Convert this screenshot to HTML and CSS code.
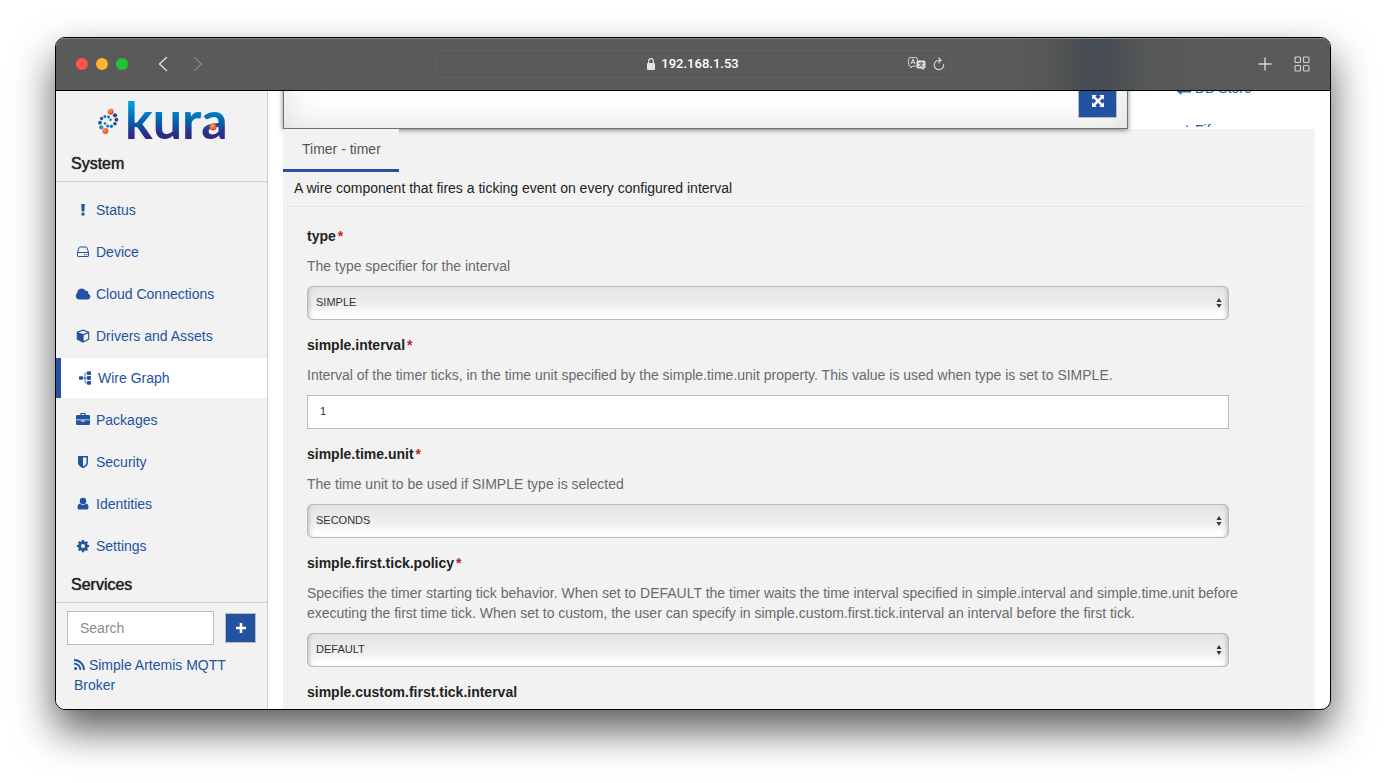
FILE: index.html
```html
<!DOCTYPE html>
<html lang="en">
<head>
<meta charset="utf-8">
<meta name="viewport" content="width=device-width, initial-scale=1">
<title>Kura - Wire Graph</title>
<link rel="stylesheet" href="styles.css">
</head>
<body>
<div class="window">
  <header class="toolbar">
    <div class="toolbar-left">
      <span class="light light-close"></span>
      <span class="light light-min"></span>
      <span class="light light-max"></span>
      <button class="tool tool-back" type="button" aria-label="Back">
        <svg width="10" height="16" viewBox="0 0 10 16"><path d="M8.500 1.500 1.500 8l7 6.500" fill="none" stroke="#d8d8d8" stroke-width="1.600" stroke-linecap="round" stroke-linejoin="round"/></svg>
      </button>
      <button class="tool tool-forward" type="button" aria-label="Forward">
        <svg width="10" height="16" viewBox="0 0 10 16"><path d="m1.500 1.500 7 6.500-7 6.500" fill="none" stroke="#828282" stroke-width="1.600" stroke-linecap="round" stroke-linejoin="round"/></svg>
      </button>
    </div>
    <div class="address">
      <div class="address-host">
        <svg width="8" height="12" viewBox="0 0 8 12"><rect y="5" width="8" height="7" rx="1" fill="#e4e4e4"/><path d="M1.700 5.500V3.200a2.300 2.500 0 0 1 4.600 0v2.300" fill="none" stroke="#e4e4e4" stroke-width="1.200"/></svg>
        <span>192.168.1.53</span>
      </div>
      <div class="address-tools">
        <button class="tool" type="button" aria-label="Translate">
          <svg width="18" height="14" viewBox="0 0 18 14"><path d="M8 9H5L3 11V9H2.300Q.6 9 .6 7.300V2.300Q.6.6 2.300.6h5.400q1.700 0 1.700 1.700V4" fill="none" stroke="#d6d6d6"/><path d="m3 7 2-5 2 5M3.700 5.400h2.600" fill="none" stroke="#d6d6d6"/><path d="M10 3.500h6q1.500 0 1.500 1.500v5q0 1.500-1.500 1.500h-.5v2l-2-2H10q-1.500 0-1.500-1.500V5q0-1.500 1.500-1.500z" fill="#dedede"/><path d="M10.500 6.200h5M13 5v1.200m1.500 0q-.5 2.500-4 3.600m1-3.600q.5 2.500 4 3.600" fill="none" stroke="#5a5a5a" stroke-width=".9"/></svg>
        </button>
        <button class="tool" type="button" aria-label="Reload">
          <svg width="12" height="14" viewBox="0 0 12 14"><path d="M10.600 7.500A4.700 4.700 0 1 1 6 3.300h1.500" fill="none" stroke="#d0d0d0" stroke-width="1.200" stroke-linecap="round"/><path d="m5.600.9 2.500 2.400-2.500 2.500" fill="none" stroke="#d0d0d0" stroke-width="1.200" stroke-linecap="round" stroke-linejoin="round"/></svg>
        </button>
      </div>
    </div>
    <div class="toolbar-right">
      <button class="tool" type="button" aria-label="New tab">
        <svg width="14" height="14" viewBox="0 0 14 14"><path d="M7 .5v13M.5 7h13" stroke="#d4d4d4" stroke-width="1.400"/></svg>
      </button>
      <button class="tool" type="button" aria-label="Tab overview">
        <svg width="16" height="16" viewBox="0 0 16 16"><g fill="none" stroke="#cfcfcf" stroke-width="1.200"><rect x="1" y="1" width="5.500" height="5.500" rx="1"/><rect x="9.500" y="1" width="5.500" height="5.500" rx="1"/><rect x="1" y="9.500" width="5.500" height="5.500" rx="1"/><rect x="9.500" y="9.500" width="5.500" height="5.500" rx="1"/></g></svg>
      </button>
    </div>
  </header>

  <div class="page">
    <aside class="sidebar">
      <div class="brand">
        <svg class="logo" width="128" height="38" viewBox="0 0 128 38" role="img" aria-label="kura">
          <defs>
            <linearGradient id="word" gradientUnits="userSpaceOnUse" x1="0" y1="0" x2="0" y2="38">
              <stop offset="0" stop-color="#00a3e6"/><stop offset=".5" stop-color="#0467b0"/><stop offset=".85" stop-color="#2b2f86"/><stop offset="1" stop-color="#33277f"/>
            </linearGradient>
            <radialGradient id="ball" cx=".4" cy=".35"><stop offset="0" stop-color="#f9a05c"/><stop offset="1" stop-color="#e8572c"/></radialGradient>
          </defs>
          <circle cx="12.700" cy="10.700" r="3" fill="url(#ball)"/>
          <circle cx="7.400" cy="30" r="3" fill="url(#ball)"/>
          <g fill="#20498f">
            <circle cx="17" cy="14.300" r="2.100"/><circle cx="18.400" cy="18.700" r="1.900"/><circle cx="17" cy="22.700" r="1.800"/>
          </g>
          <g fill="#1876b4">
            <circle cx="13.400" cy="25.300" r="1.700"/><circle cx="9.700" cy="24.900" r="1.500"/><circle cx="7" cy="22.500" r="1.300"/>
            <circle cx="12.500" cy="18.700" r="1.300"/><circle cx="10.500" cy="16" r="1.400"/><circle cx="6.900" cy="15.600" r="1.500"/>
          </g>
          <g fill="#1a5d9e">
            <circle cx="3.600" cy="17.500" r="1.700"/><circle cx="2" cy="21.700" r="1.900"/>
          </g>
          <circle cx="3.200" cy="26.300" r="2.100" fill="#1c8fce"/>
          <text class="wordmark" x="27" y="38" fill="url(#word)">kura</text>
          <circle cx="115" cy="26" r="3.500" fill="url(#ball)"/>
        </svg>
      </div>

      <h2 class="side-heading">System</h2>
      <ul class="nav">
        <li><a class="nav-link" href="#status"><svg class="icon" viewBox="0 0 14 14"><path d="M5.200 1h3.600l-.5 7.500H5.700zM5.500 9.700h3v2.900h-3z"/></svg>Status</a></li>
        <li><a class="nav-link" href="#device"><svg class="icon" viewBox="0 0 14 14"><path d="M1.500 7.500 3 2.700q.2-.7 1-.7h6q.8 0 1 .7l1.500 4.800M1.500 7.500h11v3.300q0 .7-.7.700H2.200q-.7 0-.7-.7z" fill="none" stroke="currentColor"/><path d="M8 9h1.200v1.200H8zm2.200 0h1.200v1.200h-1.200z"/></svg>Device</a></li>
        <li><a class="nav-link" href="#cloud"><svg class="icon icon-wide" viewBox="0 0 16 14"><path d="M4 12.500A3.700 3.700 0 0 1 2.300 5.800 4.300 4.300 0 0 1 10.300 3.600 2.700 2.700 0 0 1 13.400 6.700 3 3 0 0 1 12.700 12.500z"/></svg>Cloud Connections</a></li>
        <li><a class="nav-link" href="#drivers"><svg class="icon" viewBox="0 0 14 14"><path fill-rule="evenodd" d="M7 .5l6.200 2.300v7.600L7 13.800.8 10.400V2.800zM7 1.700 2.400 3.400 7 5.100l4.600-1.700zM7.600 6.200v6l4.500-2.500V4.500z"/></svg>Drivers and Assets</a></li>
        <li><a class="nav-link nav-link-active" href="#wires" aria-current="page"><svg class="icon" viewBox="0 0 14 14"><rect x="1" y="5.200" width="4" height="3.600" rx=".8"/><rect x="9" y=".2" width="4" height="3.800" rx=".8"/><rect x="9" y="5.100" width="4" height="3.800" rx=".8"/><rect x="9" y="10" width="4" height="3.800" rx=".8"/><path d="M5 7h4M9 2H7.800q-.8 0-.8.800v8.400q0 .8.800.8H9" fill="none" stroke="currentColor" stroke-width=".8"/></svg>Wire Graph</a></li>
        <li><a class="nav-link" href="#packages"><svg class="icon" viewBox="0 0 14 14"><path fill-rule="evenodd" d="M4.300 2V.8q0-.8.800-.8h3.800q.8 0 .8.800V2h3q1.300 0 1.300 1.300v3.200H0V3.300Q0 2 1.300 2zm1.200 0h3v-.9h-3zM0 7.300h5.400v.8q0 .6.600.6h2q.6 0 .6-.6v-.8H14v3.500q0 1.200-1.200 1.200H1.200Q0 12 0 10.800zM6.300 7.300h1.400v.7H6.300z"/></svg>Packages</a></li>
        <li><a class="nav-link" href="#security"><svg class="icon" viewBox="0 0 14 14"><path fill-rule="evenodd" d="M2 1h10v6.500q0 3.500-5 5.700-5-2.200-5-5.700zm5 1.500v8.900q3.500-1.700 3.500-3.900v-5z"/></svg>Security</a></li>
        <li><a class="nav-link" href="#identities"><svg class="icon" viewBox="0 0 14 14"><circle cx="7" cy="4" r="3.200"/><path d="M3.900 6.500Q5 7.900 7 7.900t3.100-1.400q2.400.5 2.400 4 0 2-1.800 2H3.300q-1.800 0-1.800-2 0-3.500 2.400-4z"/></svg>Identities</a></li>
        <li><a class="nav-link" href="#settings"><svg class="icon" viewBox="0 0 14 14"><path fill-rule="evenodd" d="M6 1h2l.3 1.600 1 .4 1.300-.9 1.400 1.400-.9 1.300.4 1 1.600.3v2l-1.600.3-.4 1 .9 1.300-1.400 1.400-1.300-.9-1 .4L8 13.200H6l-.3-1.600-1-.4-1.300.9L2 10.700l.9-1.300-.4-1L.9 8.100v-2l1.600-.3.4-1L2 3.500l1.400-1.400 1.300.9 1-.4zM7 5a2.100 2.100 0 1 0 0 4.200A2.100 2.100 0 0 0 7 5z"/></svg>Settings</a></li>
      </ul>

      <h2 class="side-heading">Services</h2>
      <div class="search-row">
        <input class="search" type="text" placeholder="Search" aria-label="Search services">
        <button class="btn btn-add" type="button" aria-label="Add service">
          <svg width="10" height="10" viewBox="0 0 10 10"><path d="M5 0v10M0 5h10" stroke="#fff" stroke-width="2.600"/></svg>
        </button>
      </div>
      <a class="service" href="#broker"><svg width="11" height="11" viewBox="0 0 11 11"><circle cx="1.600" cy="9.400" r="1.500"/><path d="M0 4.600a6.300 6.300 0 0 1 6.400 6.400M0 1a10 10 0 0 1 10 10" fill="none" stroke="currentColor" stroke-width="1.800"/></svg> Simple Artemis MQTT Broker</a>
    </aside>

    <main class="main">
      <div class="graph-row">
        <div class="canvas">
          <button class="btn btn-full" type="button" aria-label="Full screen">
            <svg width="12" height="12" viewBox="0 0 12 12"><path d="M0 0h4.800L3.300 1.500 6 4.200l2.700-2.700L7.200 0H12v4.800l-1.500-1.500L7.800 6l2.700 2.700L12 7.200V12H7.200l1.500-1.500L6 7.800l-2.700 2.700L4.800 12H0V7.200l1.500 1.500L4.200 6 1.500 3.300 0 4.800z" fill="#fff"/></svg>
          </button>
        </div>
        <div class="palette">
          <a class="palette-item" href="#dbstore"><svg width="14" height="14" viewBox="0 0 14 14"><path d="M0 10.500 4.500 6v3.400H14v2H4.500V14z"/></svg>DB Store</a>
          <a class="palette-item" href="#fifo"><svg width="14" height="14" viewBox="0 0 14 14"><path d="M0 6h9.500V1.500L14 7l-4.500 5V8H0z"/></svg>Fifo</a>
        </div>
      </div>

      <section class="panel">
        <div class="tabs"><a class="tab" href="#timer">Timer - timer</a></div>
        <p class="summary">A wire component that fires a ticking event on every configured interval</p>
        <form class="form">
          <div class="field">
            <label class="label" for="type">type<span class="required">*</span></label>
            <p class="help">The type specifier for the interval</p>
            <div class="select-box">
              <select class="select" id="type"><option>SIMPLE</option></select>
              <svg class="arrows" width="6" height="10" viewBox="0 0 6 10"><path d="M3 0 5.500 4h-5zM3 10 .5 6h5z"/></svg>
            </div>
          </div>
          <div class="field">
            <label class="label" for="interval">simple.interval<span class="required">*</span></label>
            <p class="help">Interval of the timer ticks, in the time unit specified by the simple.time.unit property. This value is used when type is set to SIMPLE.</p>
            <input class="input" id="interval" type="text" value="1">
          </div>
          <div class="field">
            <label class="label" for="unit">simple.time.unit<span class="required">*</span></label>
            <p class="help">The time unit to be used if SIMPLE type is selected</p>
            <div class="select-box">
              <select class="select" id="unit"><option>SECONDS</option></select>
              <svg class="arrows" width="6" height="10" viewBox="0 0 6 10"><path d="M3 0 5.500 4h-5zM3 10 .5 6h5z"/></svg>
            </div>
          </div>
          <div class="field">
            <label class="label" for="policy">simple.first.tick.policy<span class="required">*</span></label>
            <p class="help">Specifies the timer starting tick behavior. When set to DEFAULT the timer waits the time interval specified in simple.interval and simple.time.unit before executing the first time tick. When set to custom, the user can specify in simple.custom.first.tick.interval an interval before the first tick.</p>
            <div class="select-box">
              <select class="select" id="policy"><option>DEFAULT</option></select>
              <svg class="arrows" width="6" height="10" viewBox="0 0 6 10"><path d="M3 0 5.500 4h-5zM3 10 .5 6h5z"/></svg>
            </div>
          </div>
          <div class="field">
            <span class="label">simple.custom.first.tick.interval</span>
          </div>
        </form>
      </section>
    </main>
  </div>
</div>
</body>
</html>
```

FILE: styles.css
```css
* {
  box-sizing: border-box;
}

body {
  margin: 0;
  height: 100vh;
  padding: 37px 55px 73px;
  overflow: hidden;
  background: #fff;
  color: #222;
  font: 14px/20px "Liberation Sans", Arial, sans-serif;
}

h2, p, ul {
  margin: 0;
  padding: 0;
}

a {
  color: #2352a0;
  text-decoration: none;
}

button, input, select {
  font-family: inherit;
  margin: 0;
}

svg {
  display: block;
  fill: currentColor;
}

.window {
  display: flex;
  flex-direction: column;
  height: 100%;
  border: 1px solid #000;
  border-radius: 10px;
  overflow: hidden;
  background: #fff;
  box-shadow: 0 20px 40px rgba(0, 0, 0, .65);
}

/* Browser toolbar */
.toolbar {
  flex: none;
  display: grid;
  grid-template-columns: 1fr minmax(200px, 515px) 1fr;
  align-items: center;
  height: 53px;
  padding: 0 20px;
  border-bottom: 1px solid #000;
  box-shadow: inset 0 1px 0 #858585;
  background: linear-gradient(90deg, #5a5a5a 75%, #565855 78%, #474c53 81%, #474c53 82%, #575957 86%, #5a5a5a 95%);
}

.toolbar-left,
.toolbar-right {
  display: flex;
  align-items: center;
}

.toolbar-left {
  gap: 8px;
}

.toolbar-right {
  justify-content: flex-end;
  gap: 22px;
}

.light {
  width: 12px;
  height: 12px;
  border-radius: 50%;
}

.light-close { background: #ff544d; }
.light-min { background: #ffb429; }
.light-max { background: #25c138; }

.tool {
  padding: 0;
  border: 0;
  background: none;
}

.tool-back {
  margin-left: 22px;
}

.tool-forward {
  margin-left: 17px;
}

.address {
  display: grid;
  grid-template-columns: 1fr auto 1fr;
  align-items: center;
  height: 28px;
  padding: 0 5px;
  border: 1px solid #626262;
  border-radius: 6px;
}

.address-host {
  grid-column: 2;
  display: flex;
  align-items: center;
  gap: 6px;
  color: #fff;
  font: 500 13px/16px Roboto, sans-serif;
}

.address-tools {
  display: flex;
  justify-content: flex-end;
  gap: 7px;
}

/* Page */
.page {
  flex: 1;
  min-height: 0;
  display: flex;
  overflow: hidden;
}

.sidebar {
  flex: none;
  width: 212px;
  border-right: 1px solid #ccc;
  background: #f2f2f2;
}

.brand {
  display: flex;
  justify-content: center;
  padding: 10px 0 6px;
}

.logo {
  overflow: visible;
}

.wordmark {
  font: 700 52px Lato, sans-serif;
}

.side-heading {
  padding: 9px 15px 7px;
  border-bottom: 1px solid #d2d2d2;
  font-size: 16px;
  font-weight: 400;
  line-height: 20px;
  text-shadow: 0 0 1px #222;
}

.nav {
  display: flex;
  flex-direction: column;
  gap: 2px;
  padding-top: 8px;
  list-style: none;
}

.nav-link {
  display: flex;
  align-items: center;
  gap: 6px;
  padding: 10px 15px 10px 20px;
}

.nav-link-active {
  padding-left: 17px;
  border-left: 5px solid #2352a0;
  background: #fff;
}

.icon {
  width: 14px;
  height: 14px;
}

.icon-wide {
  width: 16px;
  margin: 0 -1px;
}

.search-row {
  display: flex;
  align-items: center;
  gap: 11px;
  padding: 8px 11px;
}

.search {
  flex: 1;
  min-width: 0;
  height: 34px;
  padding: 6px 12px;
  border: 1px solid #bbb;
  border-radius: 0;
  font-size: 14px;
}

.search::placeholder {
  color: #8c8c8c;
}

.btn {
  display: flex;
  align-items: center;
  justify-content: center;
  padding: 0;
  border: 1px solid #bbb;
  background: #2352a0;
}

.btn-add {
  width: 31px;
  height: 30px;
}

.btn-full {
  width: 39px;
  height: 34px;
}

.service {
  display: block;
  padding: 2px 18px;
}

.service svg {
  display: inline-block;
}

.main {
  flex: 1;
  min-width: 0;
  padding: 0 15px;
}

/* The graph area is scrolled partly out of view */
.graph-row {
  display: flex;
  height: 80px;
  margin-top: -42px;
}

.canvas {
  position: relative;
  z-index: 1;
  flex: 1;
  display: flex;
  align-items: flex-end;
  justify-content: flex-end;
  padding: 10px;
  border: 1px solid #707070;
  background: #fff;
  box-shadow: inset 0 0 36px #ddd, 0 1px 5px rgba(0, 0, 0, .5);
}

.palette {
  display: flex;
  flex-direction: column;
  gap: 2px;
  width: 187px;
  margin-bottom: 2px;
  padding: 19px 0 0 49px;
  overflow: hidden;
}

.palette-item {
  display: flex;
  align-items: center;
  gap: 4px;
  padding: 10px 0;
  color: #2563ab;
}

.panel {
  height: 100%;
  background: #f2f2f2;
}

.tabs {
  display: flex;
}

.tab {
  position: relative;
  z-index: 2;
  padding: 10px 18px 10px 19px;
  border-bottom: 3px solid #2352a0;
  background: #f2f2f2;
  color: #555;
}

.summary {
  padding: 6px 11px 8px;
}

.form {
  margin: 0 4px;
  padding: 19px;
  border: 1px solid #e7e7e7;
  border-right-color: #efefef;
  border-left-color: #efefef;
}

.field {
  display: flex;
  flex-direction: column;
  gap: 10px;
  margin-bottom: 15px;
}

.label {
  font-weight: 700;
}

.required {
  padding-left: 2px;
  color: #b22;
}

.help {
  color: #6a6a6a;
}

.select-box {
  position: relative;
}

.select-box,
.input {
  width: calc(100% - 62px);
}

.select,
.input {
  height: 34px;
  border: 1px solid #bbb;
  color: #333;
  font-size: 11px;
}

.select {
  display: block;
  width: 100%;
  padding: 0 20px 2px 8px;
  appearance: none;
  border-radius: 5px;
  background: linear-gradient(#e5e5e5, #eee 55%, #fff 90%);
  box-shadow: inset 4px 0 4px -3px #bbb, inset -4px 0 4px -3px #bbb;
}

.input {
  padding: 0 12px 2px;
  border-radius: 0;
  background: #fff;
}

.arrows {
  position: absolute;
  top: 12px;
  right: 7px;
  color: #333;
  pointer-events: none;
}
```
